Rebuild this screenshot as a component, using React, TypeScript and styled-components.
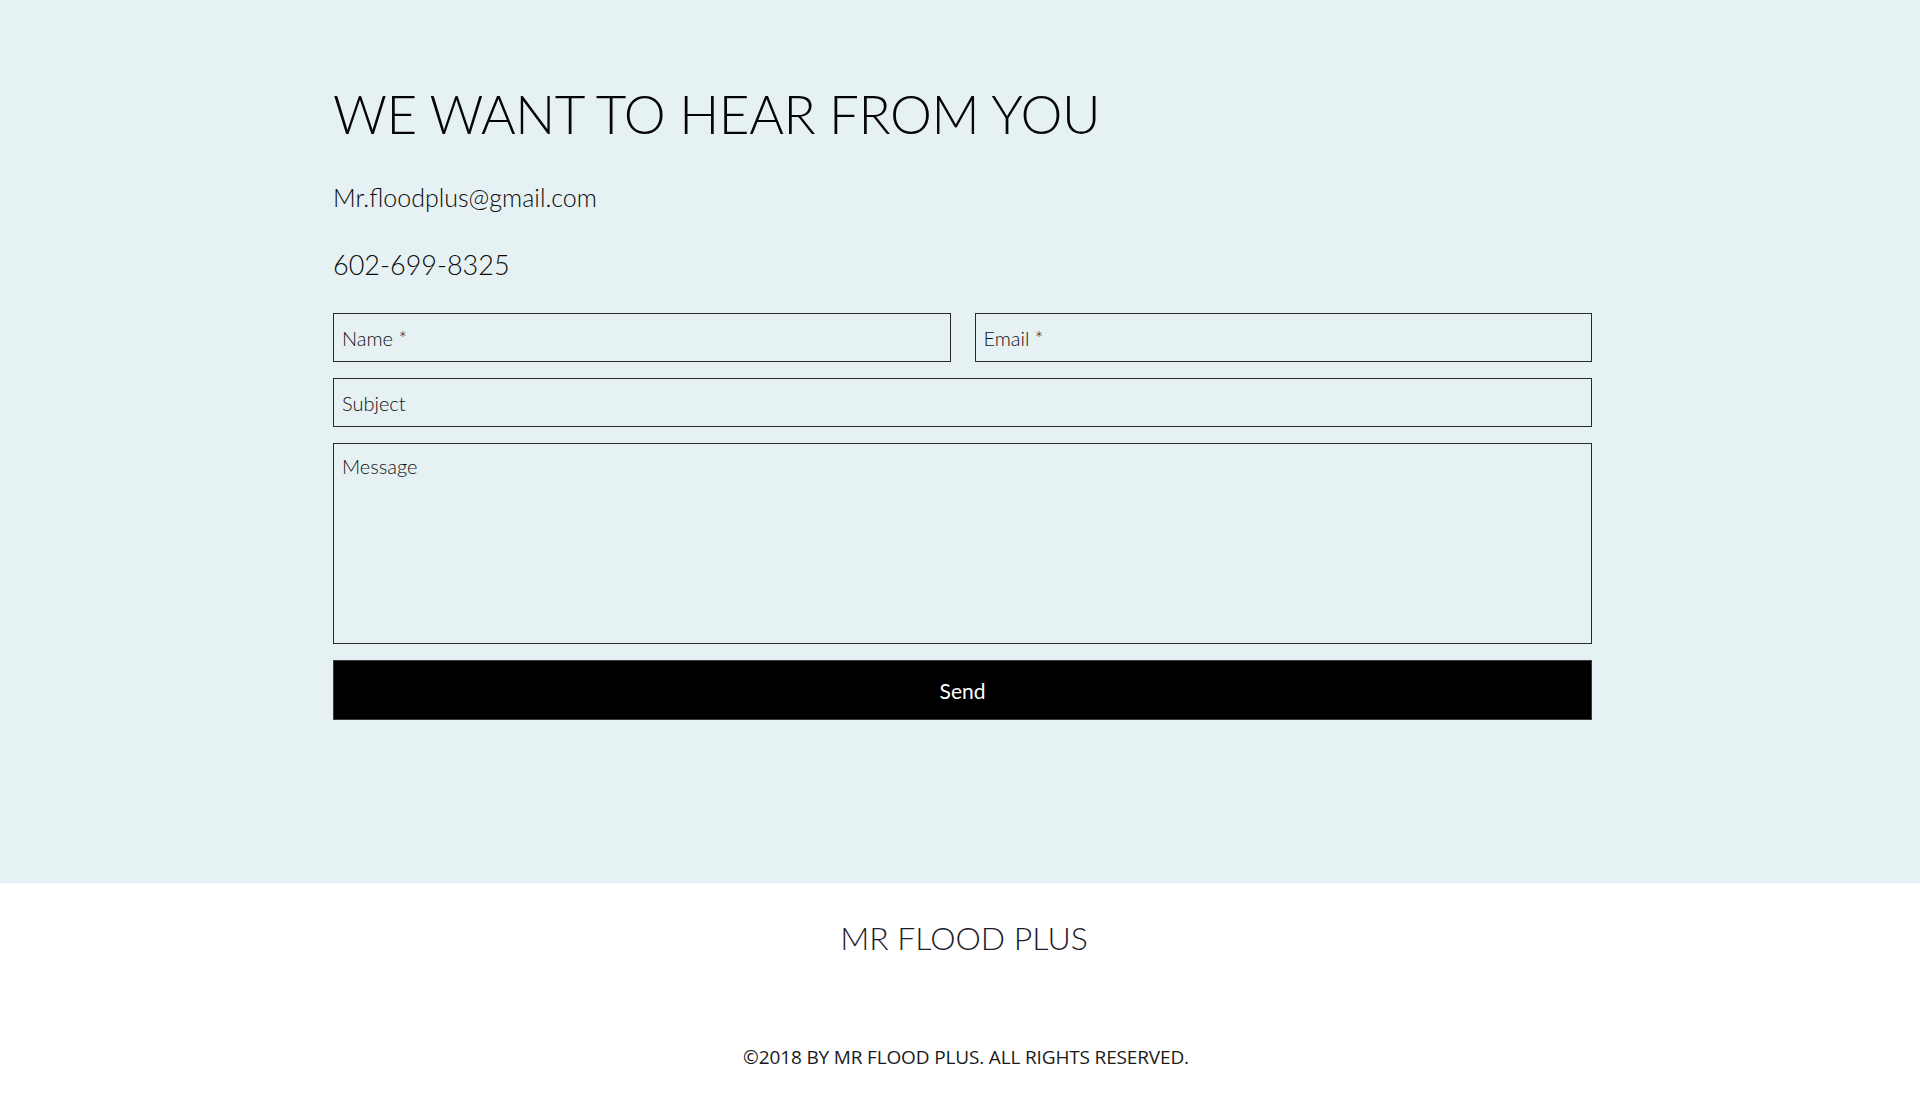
import React from "react";
import styled, { createGlobalStyle } from "styled-components";

const GlobalStyle = createGlobalStyle`
  html, body {
    margin: 0;
    padding: 0;
    background: #ffffff;
  }
  * { box-sizing: border-box; }
`;

const Page = styled.div`
  width: 100%;
  min-height: 1095px;
  display: flex;
  flex-direction: column;
`;

const ContactSection = styled.section`
  background: #e6f1f3;
  height: 883px;
  padding: 82px 0 0 333px;
`;

const Content = styled.div`
  width: 1259px;
  display: flex;
  flex-direction: column;
`;

const Heading = styled.h1`
  margin: 0;
  font-family: Lato, "Noto Sans", sans-serif;
  font-weight: 300;
  font-size: 53px;
  line-height: 64px;
  color: #050505;
  letter-spacing: -0.45px;
`;

const InfoLine = styled.p<{ $size: number; $lh: number; $gap: number }>`
  margin: ${(p) => p.$gap}px 0 0 0;
  font-family: Lato, "Noto Sans", sans-serif;
  font-weight: 300;
  font-size: ${(p) => p.$size}px;
  line-height: ${(p) => p.$lh}px;
  color: #0a0a0a;
`;

const Form = styled.form`
  margin-top: 32px;
  display: flex;
  flex-direction: column;
  gap: 16px;
`;

const Row = styled.div`
  display: grid;
  grid-template-columns: 1fr 1fr;
  gap: 24px;
`;

const fieldBase = `
  width: 100%;
  border: 1px solid #2a2a2a;
  background: transparent;
  font-family: Lato, "Noto Sans", sans-serif;
  font-weight: 300;
  font-size: 20px;
  color: #111111;
  outline: none;
  border-radius: 0;
  &::placeholder {
    color: #111111;
    opacity: 1;
  }
`;

const Input = styled.input`
  ${fieldBase}
  height: 49px;
  padding: 0 8px;
`;

const TextArea = styled.textarea`
  ${fieldBase}
  height: 201px;
  padding: 9px 8px;
  line-height: 26px;
  resize: none;
  display: block;
`;

const SendButton = styled.button`
  height: 60px;
  width: 100%;
  background: #000000;
  border: 1px solid #3a3a3a;
  color: #ffffff;
  font-family: Lato, "Noto Sans", sans-serif;
  font-weight: 400;
  font-size: 21px;
  cursor: pointer;
`;

const Footer = styled.footer`
  background: #ffffff;
  height: 212px;
  padding: 36px 0 0 8px;
  display: flex;
  flex-direction: column;
  align-items: center;
`;

const FooterTitle = styled.div`
  font-family: Lato, "Noto Sans", sans-serif;
  font-weight: 300;
  font-size: 32px;
  line-height: 38px;
  color: #1c1c2a;
`;

const Copyright = styled.div`
  margin-top: 87px;
  padding-left: 4px;
  font-family: "Open Sans", "Liberation Sans", sans-serif;
  font-weight: 400;
  font-size: 19px;
  line-height: 26px;
  letter-spacing: -0.15px;
  color: #1a1a1a;
`;

export default function App() {
  return (
    <Page>
      <GlobalStyle />
      <ContactSection>
        <Content>
          <Heading>WE WANT TO HEAR FROM YOU</Heading>
          <InfoLine $size={25} $lh={30} $gap={36}>
            Mr.floodplus@gmail.com
          </InfoLine>
          <InfoLine $size={27} $lh={32} $gap={37}>
            602-699-8325
          </InfoLine>
          <Form onSubmit={(e) => e.preventDefault()}>
            <Row>
              <Input type="text" placeholder="Name *" />
              <Input type="email" placeholder="Email *" />
            </Row>
            <Input type="text" placeholder="Subject" />
            <TextArea placeholder="Message" />
            <SendButton type="submit">Send</SendButton>
          </Form>
        </Content>
      </ContactSection>
      <Footer>
        <FooterTitle>MR FLOOD PLUS</FooterTitle>
        <Copyright>©2018 BY MR FLOOD PLUS. ALL RIGHTS RESERVED.</Copyright>
      </Footer>
    </Page>
  );
}
